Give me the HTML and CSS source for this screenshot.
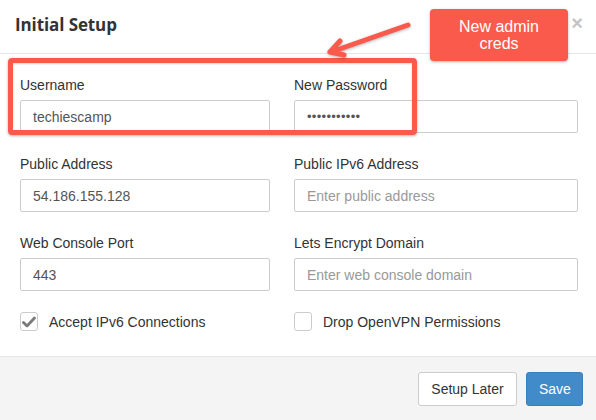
FILE: index.html
```html
<!DOCTYPE html>
<html>
<head>
<meta charset="utf-8">
<link rel="stylesheet" href="styles.css">
</head>
<body>
<div class="modal">
  <div class="modal-header">
    <h1 class="title">Initial Setup</h1>
    <span class="close">×</span>
  </div>
  <div class="modal-body">
    <div class="grid">
      <div class="group">
        <label class="label">Username</label>
        <input class="input" type="text" value="techiescamp">
      </div>
      <div class="group">
        <label class="label">New Password</label>
        <input class="input pw" type="text" value="•••••••••••">
      </div>
      <div class="group">
        <label class="label">Public Address</label>
        <input class="input" type="text" value="54.186.155.128">
      </div>
      <div class="group">
        <label class="label">Public IPv6 Address</label>
        <input class="input" type="text" placeholder="Enter public address">
      </div>
      <div class="group">
        <label class="label">Web Console Port</label>
        <input class="input" type="text" value="443">
      </div>
      <div class="group">
        <label class="label">Lets Encrypt Domain</label>
        <input class="input" type="text" placeholder="Enter web console domain">
      </div>
      <div class="check-row">
        <span class="checkbox">
          <svg width="14" height="12" viewBox="0 0 14 12"><path d="M1.5 6.5 L5 10 L12.5 2" fill="none" stroke="#7a7a7a" stroke-width="2.8" stroke-linecap="round" stroke-linejoin="round"/></svg>
        </span>
        <span class="check-label">Accept IPv6 Connections</span>
      </div>
      <div class="check-row">
        <span class="checkbox"></span>
        <span class="check-label">Drop OpenVPN Permissions</span>
      </div>
    </div>
  </div>
  <div class="modal-footer">
    <button class="btn btn-default">Setup Later</button>
    <button class="btn btn-primary">Save</button>
  </div>

  <div class="highlight"></div>
  <svg class="arrow" width="596" height="80" viewBox="0 0 596 80">
    <g fill="none" stroke="#fa5a4c" stroke-width="5" stroke-linecap="round" stroke-linejoin="round">
      <line x1="408" y1="25" x2="331" y2="52"/>
      <polyline points="340,41 330,52 344,55"/>
    </g>
  </svg>
  <div class="callout">New admin<br>creds</div>
</div>
</body>
</html>
```
FILE: styles.css
```css
* { box-sizing: border-box; }
html, body { margin: 0; padding: 0; background: #fff; }
body { font-family: "Liberation Sans", Arial, sans-serif; color: #333; }

.modal {
  position: relative;
  width: 596px;
  height: 420px;
  display: flex;
  flex-direction: column;
  background: #fff;
  overflow: hidden;
}

.modal-header {
  height: 54px;
  border-bottom: 1px solid #e5e5e5;
  display: flex;
  align-items: center;
  justify-content: space-between;
  padding: 0 13px 4px 15px;
}
.title {
  margin: 0;
  font-family: "Open Sans", "DejaVu Sans", sans-serif;
  font-weight: 700;
  font-size: 17px;
  color: #333;
  letter-spacing: -0.1px;
}
.close {
  font-family: "Liberation Sans", Arial, sans-serif;
  font-weight: 700;
  font-size: 20px;
  color: #c4c4c4;
  line-height: 1;
  margin-top: -4px;
}

.modal-body {
  padding: 21px 18px 24px 20px;
  flex: 1;
}
.grid {
  display: grid;
  grid-template-columns: 250px 284px;
  column-gap: 24px;
  row-gap: 21px;
}
.group {
  display: flex;
  flex-direction: column;
  gap: 5px;
}
.label {
  font-size: 14px;
  line-height: 20px;
  color: #333;
}
.input {
  height: 33px;
  border: 1px solid #ccc;
  border-radius: 2px;
  padding: 0 12px;
  font-family: "Liberation Sans", Arial, sans-serif;
  font-size: 14px;
  color: #555;
  background: #fff;
  outline: none;
  width: 100%;
}
.input::placeholder { color: #999; }
.pw { font-size: 13px; letter-spacing: 0.3px; }

.check-row {
  display: flex;
  align-items: center;
  gap: 11px;
  height: 19px;
}
.checkbox {
  width: 18px;
  height: 19px;
  border: 1px solid #ccc;
  border-radius: 3px;
  background: #fff;
  display: flex;
  align-items: center;
  justify-content: center;
}
.check-label {
  font-size: 14px;
  color: #333;
}

.modal-footer {
  height: 64px;
  border-top: 1px solid #e5e5e5;
  background: #f4f4f4;
  display: flex;
  justify-content: flex-end;
  align-items: flex-start;
  gap: 9px;
  padding: 15px 13px 0 0;
}
.btn {
  height: 34px;
  border-radius: 3px;
  font-family: "Liberation Sans", Arial, sans-serif;
  font-size: 14px;
  padding: 0 12px;
  cursor: pointer;
}
.btn-default {
  width: 99px;
  background: #fff;
  border: 1px solid #ccc;
  color: #333;
}
.btn-primary {
  width: 57px;
  background: #428bca;
  border: 1px solid #3a7fbb;
  color: #fff;
}

.highlight {
  position: absolute;
  left: 8px;
  top: 58px;
  width: 409px;
  height: 77px;
  border: 5px solid #fa5a4c;
  border-radius: 4px;
  box-shadow: 0 1px 3px rgba(0,0,0,0.3), inset 0 1px 2px rgba(0,0,0,0.15);
}
.arrow {
  position: absolute;
  left: 0;
  top: 0;
  filter: drop-shadow(0 1px 1.5px rgba(0,0,0,0.3));
}
.callout {
  position: absolute;
  left: 430px;
  top: 9px;
  width: 138px;
  height: 52px;
  background: #fa5a4c;
  border-radius: 4px;
  box-shadow: 0 1px 3px rgba(0,0,0,0.3);
  color: #fff;
  font-size: 16px;
  line-height: 17px;
  text-align: center;
  padding-top: 9px;
}
```
